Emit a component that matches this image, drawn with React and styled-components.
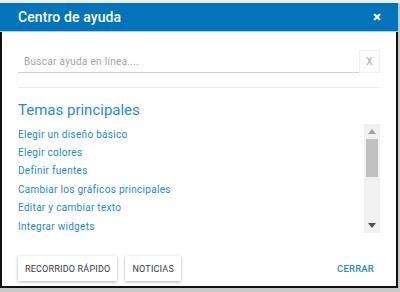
import React from 'react';
import styled, { createGlobalStyle } from 'styled-components';

const GlobalStyle = createGlobalStyle`
  html, body {
    margin: 0;
    padding: 0;
    background: #c9c9c9;
  }
  * {
    box-sizing: border-box;
  }
`;

const Page = styled.div`
  width: 400px;
  height: 292px;
  padding-top: 3px;
  background: linear-gradient(#efefef 0 3px, #c9c9c9 3px);
  font-family: Roboto, 'Noto Sans', sans-serif;
`;

const Dialog = styled.section`
  width: 398px;
  height: 285px;
  display: flex;
  flex-direction: column;
  background: #ffffff;
`;

const Header = styled.header`
  height: 29px;
  display: flex;
  align-items: center;
  justify-content: space-between;
  padding: 0 17px 0 18px;
  background: #0474ba;
  border-bottom: 1px solid #9fd0f0;
  color: #ffffff;

  h1 {
    margin: 0;
    font-size: 14px;
    font-weight: 500;
    letter-spacing: 0.1px;
  }
`;

const CloseIcon = styled.span`
  font-size: 15px;
  font-weight: 900;
  line-height: 1;
`;

const Body = styled.div`
  flex: 1;
  display: flex;
  flex-direction: column;
  border-left: 2px solid #111;
  border-right: 2px solid #111;
  border-bottom: 2px solid #111;
  padding: 18px 16px 0 16px;
`;

const SearchRow = styled.div`
  display: flex;
  align-items: stretch;
  height: 23px;
`;

const SearchInput = styled.div`
  flex: 1;
  display: flex;
  align-items: center;
  padding-left: 6px;
  border-bottom: 1px solid #d0d0d0;
  font-size: 10px;
  color: #a3a3a3;
  letter-spacing: 0.3px;
`;

const ClearBox = styled.div`
  width: 21px;
  display: flex;
  align-items: center;
  justify-content: center;
  border: 1px solid #f0f0f0;
  font-size: 10px;
  color: #aaaaaa;
`;

const Divider = styled.hr`
  margin: 14px 0 0 0;
  border: 0;
  border-top: 1px solid #ececec;
`;

const Title = styled.h2`
  margin: 13px 0 0 0;
  font-size: 15px;
  font-weight: 400;
  color: #2a8bcb;
`;

const TopicsArea = styled.div`
  display: flex;
  margin-top: 5px;
  height: 109px;
`;

const TopicList = styled.ul`
  flex: 1;
  list-style: none;
  margin: 0;
  padding: 0;
  overflow: hidden;
`;

const Topic = styled.li`
  height: 18.4px;
  display: flex;
  align-items: center;
  font-size: 10px;
  color: #2689c9;
  letter-spacing: 0.3px;
  &:first-child {
    margin-top: 1px;
  }
`;

const Scrollbar = styled.div`
  width: 16px;
  display: flex;
  flex-direction: column;
  align-items: center;
  background: #f1f1f1;
`;

const Arrow = styled.div`
  height: 15px;
  display: flex;
  align-items: center;
  justify-content: center;
  width: 100%;
`;

const Thumb = styled.div`
  width: 12px;
  height: 38px;
  background: #c1c1c1;
`;

const Spacer = styled.div`
  flex: 1;
`;

const Footer = styled.div`
  display: flex;
  align-items: center;
  gap: 8px;
  margin-top: 23px;
  padding-right: 6px;
`;

const Button = styled.button`
  height: 25px;
  padding: 0 7px;
  border: 0;
  background: #ffffff;
  box-shadow: 0 1px 3px rgba(0, 0, 0, 0.3);
  font-family: Roboto, 'Noto Sans', sans-serif;
  font-size: 9px;
  color: #3a3a3a;
  letter-spacing: 0.2px;
`;

const TextButton = styled.button`
  margin-left: auto;
  border: 0;
  background: none;
  padding: 0;
  font-family: Roboto, 'Noto Sans', sans-serif;
  font-size: 9.5px;
  font-weight: 500;
  color: #2a8bcb;
  letter-spacing: 0.2px;
`;

const topics = [
  'Elegir un diseño básico',
  'Elegir colores',
  'Definir fuentes',
  'Cambiar los gráficos principales',
  'Editar y cambiar texto',
  'Integrar widgets',
];

export default function App() {
  return (
    <>
      <GlobalStyle />
      <Page>
        <Dialog>
          <Header>
            <h1>Centro de ayuda</h1>
            <CloseIcon>×</CloseIcon>
          </Header>
          <Body>
            <SearchRow>
              <SearchInput>Buscar ayuda en línea....</SearchInput>
              <ClearBox>X</ClearBox>
            </SearchRow>
            <Divider />
            <Title>Temas principales</Title>
            <TopicsArea>
              <TopicList>
                {topics.map((t) => (
                  <Topic key={t}>{t}</Topic>
                ))}
              </TopicList>
              <Scrollbar>
                <Arrow>
                  <svg width="8" height="5" viewBox="0 0 8 5">
                    <path d="M0 5 L4 0 L8 5 Z" fill="#a3a3a3" />
                  </svg>
                </Arrow>
                <Thumb />
                <Spacer />
                <Arrow>
                  <svg width="8" height="5" viewBox="0 0 8 5">
                    <path d="M0 0 L8 0 L4 5 Z" fill="#505050" />
                  </svg>
                </Arrow>
              </Scrollbar>
            </TopicsArea>
            <Footer>
              <Button>RECORRIDO RÁPIDO</Button>
              <Button>NOTICIAS</Button>
              <TextButton>CERRAR</TextButton>
            </Footer>
          </Body>
        </Dialog>
      </Page>
    </>
  );
}
